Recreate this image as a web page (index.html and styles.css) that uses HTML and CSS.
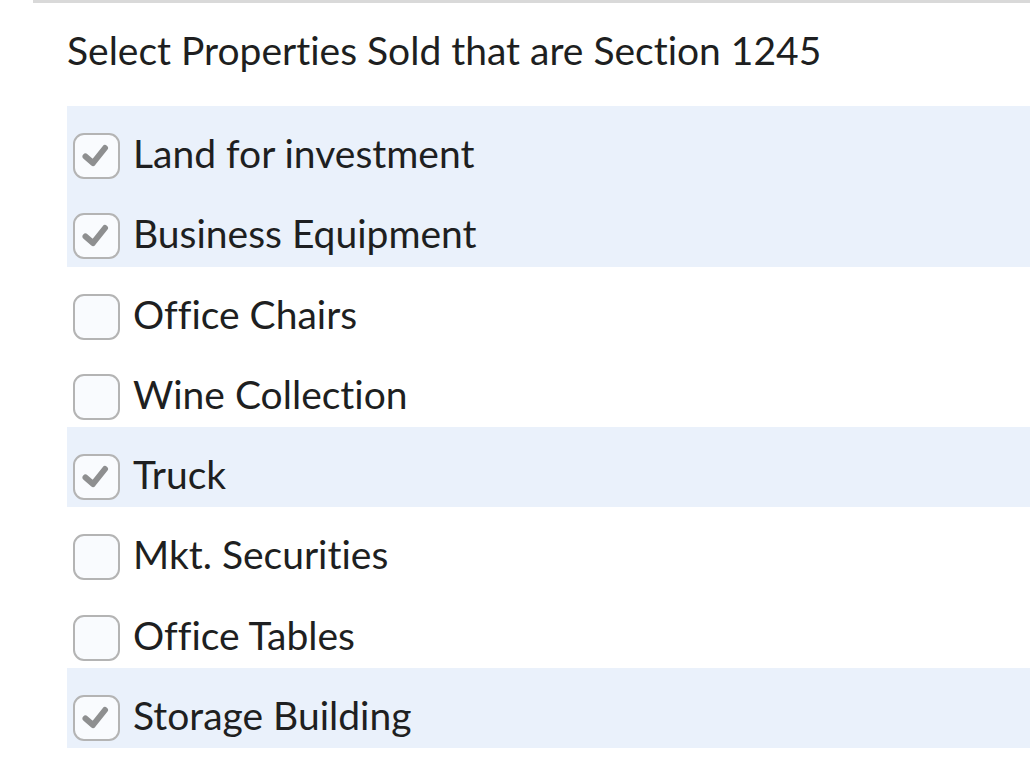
FILE: index.html
```html
<!DOCTYPE html>
<html>
	<head>
		<title>Section 1245</title>
		<link rel="stylesheet" href="styles.css">
	</head>
	<body>
		<div class="pregunta">
			<div class="contenido">
				<h2 class="titulo">Select Properties Sold that are Section 1245</h2>

				<ul class="opciones">
					<li class="opcion marcada">
						<span class="caja"><svg viewBox="0 0 42 42"><path d="M10.5 21.5 L18 28 L30 13"/></svg></span>
						<span class="texto">Land for investment</span>
					</li>
					<li class="opcion marcada">
						<span class="caja"><svg viewBox="0 0 42 42"><path d="M10.5 21.5 L18 28 L30 13"/></svg></span>
						<span class="texto">Business Equipment</span>
					</li>
					<li class="opcion">
						<span class="caja"></span>
						<span class="texto">Office Chairs</span>
					</li>
					<li class="opcion">
						<span class="caja"></span>
						<span class="texto">Wine Collection</span>
					</li>
					<li class="opcion marcada">
						<span class="caja"><svg viewBox="0 0 42 42"><path d="M10.5 21.5 L18 28 L30 13"/></svg></span>
						<span class="texto">Truck</span>
					</li>
					<li class="opcion">
						<span class="caja"></span>
						<span class="texto">Mkt. Securities</span>
					</li>
					<li class="opcion">
						<span class="caja"></span>
						<span class="texto">Office Tables</span>
					</li>
					<li class="opcion marcada">
						<span class="caja"><svg viewBox="0 0 42 42"><path d="M10.5 21.5 L18 28 L30 13"/></svg></span>
						<span class="texto">Storage Building</span>
					</li>
				</ul>
			</div>
		</div>
	</body>
</html>
```

FILE: styles.css
```css
	body
	{
		margin: 0;
		background-color: white;
		font-family: Lato, "Open Sans", sans-serif;
		font-variant-ligatures: none;
		color: #1e1f21;
		overflow: hidden;
	}

	.pregunta
	{
		margin-left: 33px;
		border-top: 3px solid #d9d9d9;
	}

	.contenido
	{
		padding-left: 34px;
	}

	.titulo
	{
		margin: 0;
		padding-top: 24px;
		height: 103px;
		box-sizing: border-box;
		font-size: 39px;
		font-weight: normal;
		line-height: 47px;
	}

	.opciones
	{
		list-style: none;
		margin: 0;
		padding: 0;
	}

	.opcion
	{
		display: flex;
		align-items: flex-start;
		height: 80.3px;
		box-sizing: border-box;
		padding: 27px 0 0 6px;
		font-size: 39px;
	}

	.opcion.marcada
	{
		background-color: #eaf1fb;
	}

	.caja
	{
		width: 47px;
		height: 46px;
		box-sizing: border-box;
		border: 2px solid #b4b4b4;
		border-radius: 11px;
		background-color: #f9fbfe;
		margin-right: 13px;
		flex-shrink: 0;
	}

	.caja svg
	{
		display: block;
		width: 42px;
		height: 42px;
	}

	.caja path
	{
		fill: none;
		stroke: #8e8f90;
		stroke-width: 6px;
		stroke-linecap: round;
		stroke-linejoin: round;
	}

	.texto
	{
		line-height: 40px;
	}
```
